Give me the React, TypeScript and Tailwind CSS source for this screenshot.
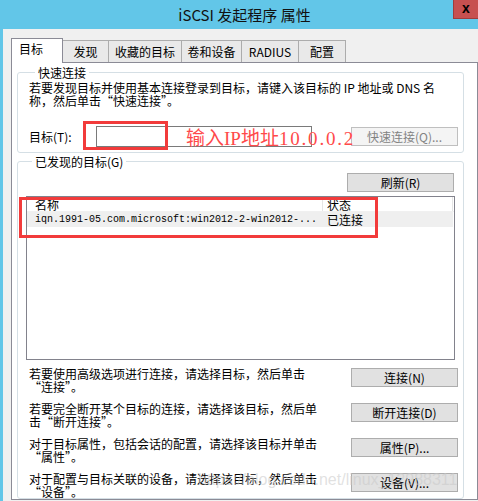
const TABS = [
  { label: "发现", w: "w-[46px]" },
  { label: "收藏的目标", w: "w-[73px]" },
  { label: "卷和设备", w: "w-[60px]" },
  { label: "RADIUS", w: "w-[57px]" },
  { label: "配置", w: "w-[47px]" },
];

const ACTIONS = [
  { lines: ["若要使用高级选项进行连接，请选择目标，然后单击", "“连接”。"], button: "连接(N)" },
  { lines: ["若要完全断开某个目标的连接，请选择该目标，然后单", "击“断开连接”。"], button: "断开连接(D)" },
  { lines: ["对于目标属性，包括会话的配置，请选择该目标并单击", "“属性”。"], button: "属性(P)..." },
  { lines: ["对于配置与目标关联的设备，请选择该目标，然后单击", "“设备”。"], button: "设备(V)..." },
];

function Button({ children, className = "" }: { children: React.ReactNode; className?: string }) {
  return (
    <div
      className={`flex h-[19px] w-[107px] shrink-0 items-center justify-center border border-[#adadad] bg-[#e1e1e1] text-[12px] leading-none text-black ${className}`}
    >
      {children}
    </div>
  );
}

export default function App() {
  return (
    <div className="relative flex h-[501px] w-[478px] flex-col overflow-hidden bg-[#62c6e8] font-['Noto_Sans_CJK_SC',sans-serif] text-black">
      {/* Title bar */}
      <div className="flex h-[29px] shrink-0 items-start">
        <div className="flex h-[29px] flex-1 items-center justify-center pl-[36px] pt-[1px] text-[15px] text-[#111]">
          iSCSI 发起程序 属性
        </div>
        <div className="flex h-[19px] w-[25px] items-center justify-center border-b border-l border-[#a03c3c] bg-[#c75050] pb-[2px] font-['Liberation_Sans',sans-serif] text-[14px] font-bold leading-none text-black">
          x
        </div>
      </div>

      {/* Window body */}
      <div className="ml-[3px] flex flex-1 flex-col bg-[#f0f0f0] pl-[8px] pt-[9px]">
        {/* Tabs */}
        <div className="flex h-[24px] items-end text-[12px]">
          <div className="relative z-10 -mb-px flex h-[25px] w-[52px] items-center border-x border-t border-[#8b8b96] bg-white pb-[4px] pl-[7px]">
            目标
          </div>
          {TABS.map((t) => (
            <div
              key={t.label}
              className={`flex h-[22px] ${t.w} items-center justify-center border-r border-t border-[#acacac] bg-[#e9e9e9]`}
            >
              {t.label}
            </div>
          ))}
        </div>

        {/* Tab panel */}
        <div className="flex w-[467px] flex-1 flex-col border border-[#8b8b96] bg-white text-[12px] leading-[13px]">
          {/* Quick connect */}
          <fieldset className="ml-[5px] mt-[3px] w-[447px] rounded-[3px] border border-[#d5dfe5] pb-[5px] pl-[11px]">
            <legend className="ml-[6px] px-[3px] leading-[13px]">快速连接</legend>
            <p className="mt-[2px] whitespace-nowrap">
              若要发现目标并使用基本连接登录到目标，请键入该目标的 IP 地址或 DNS 名
              <br />
              称，然后单击“快速连接”。
            </p>
            <div className="mt-[19px] flex items-center">
              <span className="w-[67px]">目标(T):</span>
              <div className="h-[21px] w-[216px] border border-[#7a7a7a] bg-white" />
              <div className="ml-[39px] flex h-[19px] w-[107px] items-center justify-center border border-[#bfbfbf] bg-[#f4f4f4] text-[#838383]">
                快速连接(Q)...
              </div>
            </div>
          </fieldset>

          {/* Discovered targets */}
          <fieldset className="ml-[5px] mt-[2px] w-[447px] flex-1 rounded-[3px] border border-[#d5dfe5] pl-[8px]">
            <legend className="ml-[6px] px-[3px] leading-[13px]">已发现的目标(G)</legend>
            <div className="mt-[5px] flex w-[428px] justify-end">
              <Button>刷新(R)</Button>
            </div>

            <div className="mt-[4px] h-[164px] w-[429px] border border-[#82828c] bg-white">
              <div className="flex h-[15px] border-b border-[#f0f0f0]">
                <div className="w-[296px] border-r border-[#e5e5e5] pl-[8px] leading-[15px]">名称</div>
                <div className="w-[130px] border-r border-[#e5e5e5] pl-[4px] leading-[15px]">状态</div>
              </div>
              <div className="flex h-[15px] w-[426px] items-center bg-[#efefef]">
                <div className="w-[296px] whitespace-nowrap pl-[8px] font-['Liberation_Mono',monospace] text-[10px]">
                  iqn.1991-05.com.microsoft:win2012-2-win2012-...
                </div>
                <div className="pl-[4px]">已连接</div>
              </div>
            </div>

            <div className="mt-[7px] flex flex-col gap-[9px]">
              {ACTIONS.map((a) => (
                <div key={a.button} className="flex items-start">
                  <p className="w-[325px] whitespace-nowrap pl-[3px]">
                    {a.lines[0]}
                    <br />
                    {a.lines[1]}
                  </p>
                  <Button className="mt-[1px]">{a.button}</Button>
                </div>
              ))}
            </div>
          </fieldset>
        </div>
        <div className="h-[1px]" />
      </div>

      {/* Annotations */}
      <div className="absolute left-[83px] top-[121px] h-[29px] w-[85px] border-[3px] border-[#f23b3b]" />
      <div className="absolute left-[19px] top-[197px] h-[41px] w-[359px] border-[3px] border-[#f23b3b]" />
      <div className="absolute left-[186px] top-[125px] whitespace-nowrap text-[19px] leading-[24px] text-[#ff4a4a]">
        输入<span className="font-['Liberation_Serif',serif]">IP</span>地址<span className="font-['Liberation_Serif',serif] tracking-[1.8px]">10.0.0.2</span>
      </div>
      <div className="pointer-events-none absolute left-[198px] top-[468px] whitespace-nowrap font-['Liberation_Sans',sans-serif] text-[16px] text-[rgba(200,200,200,0.55)]">
        https://blog.csdn.net/linux_12988311
      </div>
    </div>
  );
}
